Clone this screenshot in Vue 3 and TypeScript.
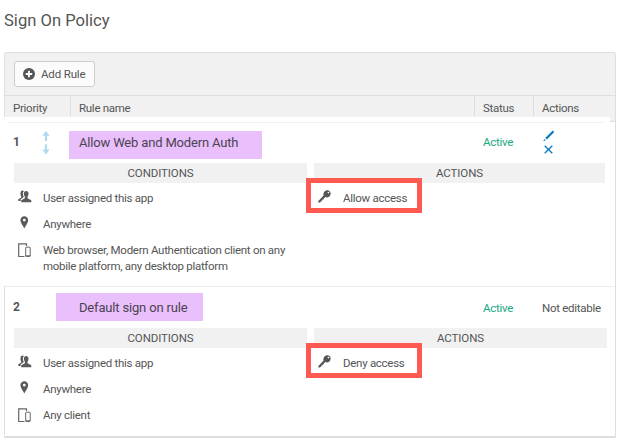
<script setup lang="ts">
interface Condition {
  icon: 'people' | 'pin' | 'devices'
  lines: string[]
}
interface Rule {
  priority: number
  name: string
  status: string
  editable: boolean
  conditions: Condition[]
  action: string
}

const rules: Rule[] = [
  {
    priority: 1,
    name: 'Allow Web and Modern Auth',
    status: 'Active',
    editable: true,
    conditions: [
      { icon: 'people', lines: ['User assigned this app'] },
      { icon: 'pin', lines: ['Anywhere'] },
      {
        icon: 'devices',
        lines: [
          'Web browser, Modern Authentication client on any',
          'mobile platform, any desktop platform',
        ],
      },
    ],
    action: 'Allow access',
  },
  {
    priority: 2,
    name: 'Default sign on rule',
    status: 'Active',
    editable: false,
    conditions: [
      { icon: 'people', lines: ['User assigned this app'] },
      { icon: 'pin', lines: ['Anywhere'] },
      { icon: 'devices', lines: ['Any client'] },
    ],
    action: 'Deny access',
  },
]
</script>

<template>
  <main class="page">
    <h1 class="title">Sign On Policy</h1>
    <section class="panel">
      <div class="toolbar">
        <button class="add" type="button">
          <svg width="12" height="12" viewBox="0 0 12 12">
            <circle cx="6" cy="6" r="6" fill="#555" />
            <path d="M6 2.8v6.4M2.8 6h6.4" stroke="#fff" stroke-width="1.8" />
          </svg>
          <span>Add Rule</span>
        </button>
      </div>
      <div class="head">
        <span class="h-priority">Priority</span>
        <span class="h-name">Rule name</span>
        <span class="h-status">Status</span>
        <span class="h-actions">Actions</span>
      </div>
      <div class="body">
        <article
          v-for="rule in rules"
          :key="rule.priority"
          class="rule"
          :class="rule.editable ? 'custom' : 'default'"
        >
          <div class="summary">
            <div class="priority">
              <b>{{ rule.priority }}</b>
              <svg v-if="rule.editable" width="8" height="24" viewBox="0 0 8 24">
                <path d="M4 0 7.6 4.800H5.100V10H2.900V4.800H.4ZM4 23.500.400 18.500H2.900V13.300H5.100V18.500H7.600Z" fill="#b0daee" />
              </svg>
            </div>
            <div class="name"><span>{{ rule.name }}</span></div>
            <div class="status">{{ rule.status }}</div>
            <div class="tools">
              <template v-if="rule.editable">
                <svg class="pencil" width="12" height="12" viewBox="0 0 12 12">
                  <path d="M2.200 8.100 9.800.600 11.300 1.900 3.900 9.500Z" fill="#0b7cc0" />
                  <path d="M1.300 8.900 2.800 10.400.300 11.100Z" fill="#0b7cc0" />
                </svg>
                <svg class="cross" width="9" height="9" viewBox="0 0 9 9">
                  <path d="M.7.7 8.300 8.300M8.300.700.700 8.300" stroke="#0b7cc0" stroke-width="1.350" />
                </svg>
              </template>
              <span v-else>Not editable</span>
            </div>
          </div>
          <div class="details">
            <div class="column">
              <h2 class="bar">CONDITIONS</h2>
              <ul class="conditions">
                <li v-for="c in rule.conditions" :key="c.icon">
                  <span class="icon">
                    <svg v-if="c.icon === 'people'" width="14" height="13" viewBox="0 0 14 13">
                      <path d="M3 1.200C3.700.300 5.300.200 6 1.200L5.200 2.100C4.600 3.500 4.900 5.500 5.700 6.600L5.300 7.500 2.600 9.200V11H.300V9.300L3.200 7.600V6.500C2.200 5.100 2.200 2.600 3 1.200Z" fill="#5a5a5a" />
                      <path d="M5.900 3.300C6.100.300 10.300.300 10.500 3.300 10.600 4.900 10.100 6 9.500 6.800V8.300L13.300 10.300V12.200H3.200V10.300L6.900 8.300V6.800C6.300 6 5.800 4.900 5.900 3.300Z" fill="#5a5a5a" />
                    </svg>
                    <svg v-else-if="c.icon === 'pin'" width="14" height="13" viewBox="0 0 14 13">
                      <path fill-rule="evenodd" d="M6.300.200A3.900 3.900 0 0 1 10.200 4.200C10.200 6.500 7.700 9.500 6.300 12.600 4.900 9.500 2.400 6.500 2.400 4.200A3.900 3.900 0 0 1 6.300.200ZM6.300 2.700A1.400 1.400 0 1 0 6.300 5.500 1.400 1.400 0 1 0 6.300 2.700Z" fill="#5a5a5a" />
                    </svg>
                    <svg v-else width="14" height="15" viewBox="0 0 14 15">
                      <path d="M6.500 13.500H.700V.900H8.500V3" fill="none" stroke="#666" stroke-width="1.200" />
                      <rect x="7.700" y="4.200" width="4.500" height="9.300" rx=".5" fill="#fff" stroke="#666" />
                      <path d="M7.500 12.700H12.500" stroke="#777" />
                    </svg>
                  </span>
                  <div class="lines">
                    <div v-for="(line, i) in c.lines" :key="i">{{ line }}</div>
                  </div>
                </li>
              </ul>
            </div>
            <div class="column right">
              <h2 class="bar">ACTIONS</h2>
              <div class="access">
                <svg width="13" height="13" viewBox="0 0 13 13">
                  <path fill-rule="evenodd" d="M6 2.200C7.400.200 10.200-.200 11.700 1.200 13.200 2.700 12.900 5.300 11.100 6.700 10 7.500 8.500 7.600 7.400 7L5.900 8.300V9.300H4.700L4.500 10.400 3.400 10.500 3.200 11.600 1.700 12.600.300 12.500.400 10.900 5.600 5.600C5.200 4.500 5.300 3.200 6 2.200ZM9.400 2.400 10.600 3.600 11.300 2.900C11.500 2.100 10.700 1.500 10 1.700Z" fill="#555" />
                </svg>
                <span>{{ rule.action }}</span>
              </div>
            </div>
          </div>
        </article>
      </div>
    </section>
  </main>
</template>

<style>
body {
  background: #fff;
}
</style>

<style scoped>
* {
  box-sizing: border-box;
}
.page {
  width: 618px;
  height: 443px;
  overflow: hidden;
  padding: 11px 2px 0 4px;
  background: #fff;
  color: #555;
  font: 11.5px/16px Roboto, "Liberation Sans", sans-serif;
  letter-spacing: -0.28px;
  white-space: nowrap;
}
.title {
  margin: 0;
  height: 41px;
  font-size: 16.6px;
  font-weight: 400;
  letter-spacing: 0;
  line-height: 20px;
}
.panel {
  height: 386px;
  border: 1px solid #dedede;
  border-bottom-width: 2px;
  border-radius: 3px 3px 1px 1px;
  background: #f1f1f1;
  display: flex;
  flex-direction: column;
}
.toolbar {
  height: 43px;
  padding: 8px 0 0 9px;
  border-bottom: 1px solid #dedede;
}
.add {
  display: flex;
  align-items: center;
  gap: 6px;
  width: 81px;
  height: 26px;
  padding: 0 0 0 8px;
  border: 1px solid #ccc;
  border-radius: 3px;
  background: #fbfbfb;
  color: #555;
  font: inherit;
  letter-spacing: -0.15px;
}
.head {
  display: flex;
  height: 21px;
  line-height: 25px;
}
.head span {
  padding-left: 8px;
}
.head span + span {
  border-left: 1px solid #dedede;
}
.h-priority {
  width: 65px;
}
.h-name {
  width: 404px;
}
.h-status {
  width: 59px;
}
.h-actions {
  flex: 1;
}
.body {
  flex: 1;
  margin-left: -1px;
  background: #fff;
}
.body::before {
  content: "";
  display: block;
  width: 5px;
  height: 4px;
  margin: 0 0 -5px auto;
  border-bottom: 1px solid #dedede;
  background: #f1f1f1;
}
.rule {
  padding-left: 10px;
}
.custom {
  height: 169px;
  padding-top: 5px;
}
.default {
  height: 149px;
  margin-left: 1px;
  padding: 6px 0 0 9px;
  border-top: 1px solid #eee;
  box-shadow: -1px 0 #dedede;
}
.custom::before {
  content: "";
  display: block;
  height: 1px;
  margin: 0 11px 8px -7px;
  background: #f0f0f0;
}
.summary {
  display: flex;
  height: 35px;
}
.custom .summary {
  height: 32px;
}
.priority {
  width: 56px;
  margin-left: -1px;
  line-height: 23px;
  display: flex;
}
.default .priority {
  width: 43px;
  line-height: 29px;
}
.default .name {
  width: 427px;
}
.priority b {
  width: 29px;
  font-size: 12px;
  font-weight: 700;
}
.name {
  width: 414px;
}
.name span {
  display: inline-block;
  width: 193px;
  height: 28px;
  padding-left: 10px;
  background: #e9bffc;
  color: #4c4351;
  font-size: 13px;
  letter-spacing: -0.17px;
  line-height: 23px;
}
.default .name span {
  width: 147px;
  padding-left: 23px;
  line-height: 29px;
}
.status {
  width: 59px;
  color: #1aa783;
  line-height: 23px;
}
.default .status,
.default .tools {
  line-height: 30px;
}
.tools {
  display: flex;
  flex-direction: column;
}
.pencil {
  margin: -1px 0 0 1px;
}
.cross {
  margin: 3px 0 0 2px;
}
.details {
  display: flex;
  gap: 7px;
}
.column {
  width: 293px;
}
.bar {
  margin: 0;
  height: 20px;
  background: #f1f1f1;
  font-size: 11.5px;
  font-weight: 400;
  letter-spacing: -0.1px;
  line-height: 21px;
  text-align: center;
}
.custom .right {
  width: 291px;
}
.conditions {
  list-style: none;
  margin: 0;
  padding: 7px 0 0 4px;
}
.conditions li {
  display: flex;
  min-height: 26.4px;
}
.lines {
  padding-top: 0.5px;
  line-height: 15.5px;
}
.icon {
  width: 25px;
  line-height: 0;
}
.access {
  display: flex;
  gap: 12px;
  width: 116px;
  height: 35px;
  margin: -5px 0 0 -8px;
  padding: 7px 0 0 7px;
  border: 5px solid #ff5a52;
  line-height: 16px;
}
</style>
